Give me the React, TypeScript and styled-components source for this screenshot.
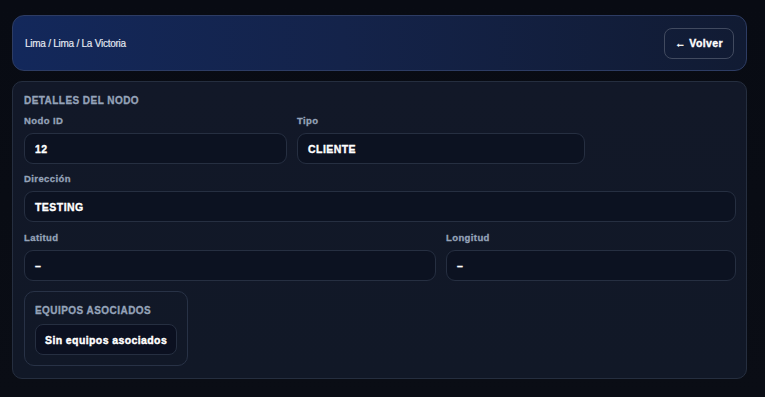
import React from "react";
import styled, { createGlobalStyle } from "styled-components";

const GlobalStyle = createGlobalStyle`
	html, body {
		margin: 0;
		padding: 0;
		background: #080b12;
		font-family: "Liberation Sans", Arial, sans-serif;
	}
`;

const Page = styled.div`
	min-height: 397px;
	box-sizing: border-box;
	padding: 15px 18px 0 12px;
	display: flex;
	flex-direction: column;
	gap: 10px;
	background: linear-gradient(180deg, #080b13 0%, #0a0d15 100%);
`;

const Header = styled.header`
	height: 56px;
	box-sizing: border-box;
	display: flex;
	align-items: center;
	justify-content: space-between;
	padding: 0 12px 0 12px;
	border: 1px solid #2d3c63;
	border-radius: 12px;
	background: linear-gradient(90deg, #13285b 0%, #14234a 45%, #111b33 100%);
`;

const Breadcrumb = styled.span`
	color: #e8ecf4;
	font-size: 10px;
	letter-spacing: -0.25px;
	-webkit-text-stroke: 0.15px #e8ecf4;
`;

const BackButton = styled.button`
	height: 31px;
	padding: 0 10px;
	border: 1px solid #414a5f;
	border-radius: 8px;
	background: transparent;
	color: #ffffff;
	font-family: inherit;
	font-size: 10.5px;
	font-weight: 700;
	letter-spacing: 0.4px;
	-webkit-text-stroke: 0.35px #fff;
	cursor: pointer;
`;

const Card = styled.section`
	box-sizing: border-box;
	height: 298px;
	padding: 12px 10px 0 11px;
	border: 1px solid #252e3f;
	border-radius: 10px;
	background: linear-gradient(180deg, #121828 0%, #111827 100%);
	display: flex;
	flex-direction: column;
`;

const SectionTitle = styled.h3`
	margin: 0;
	color: #95a3b9;
	font-size: 10px;
	font-weight: 700;
	letter-spacing: 0.45px;
	-webkit-text-stroke: 0.3px #95a3b9;
	line-height: 14px;
`;

const Row = styled.div<{ $cols: string; $top: number }>`
	display: grid;
	grid-template-columns: ${(p) => p.$cols};
	gap: 10px;
	margin-top: ${(p) => p.$top}px;
`;

const Field = styled.div`
	display: flex;
	flex-direction: column;
	gap: 6px;
`;

const Label = styled.label`
	color: #95a3b9;
	font-size: 9.5px;
	font-weight: 700;
	letter-spacing: 0.4px;
	-webkit-text-stroke: 0.3px #95a3b9;
	line-height: 12px;
`;

const Value = styled.div`
	height: 31px;
	box-sizing: border-box;
	display: flex;
	align-items: center;
	padding: 0 10px;
	border: 1px solid #262f41;
	border-radius: 9px;
	background: #0c1221;
	color: #ffffff;
	font-size: 10.5px;
	font-weight: 700;
	letter-spacing: 0.45px;
	-webkit-text-stroke: 0.35px #fff;
`;

const Equipos = styled.div`
	margin-top: 10px;
	width: 164px;
	box-sizing: border-box;
	padding: 12px 10px 10px 10px;
	border: 1px solid #283246;
	border-radius: 10px;
	display: flex;
	flex-direction: column;
	gap: 6px;
`;

const Chip = styled.div`
	height: 31px;
	box-sizing: border-box;
	display: flex;
	align-items: center;
	padding: 0 9px;
	border: 1px solid #262f41;
	border-radius: 8px;
	background: #0b1020;
	color: #ffffff;
	font-size: 10.5px;
	font-weight: 700;
	letter-spacing: 0.4px;
	-webkit-text-stroke: 0.4px #fff;
	white-space: nowrap;
`;

const App = () => {
	return (
		<>
			<GlobalStyle />
			<Page>
				<Header>
					<Breadcrumb>Lima / Lima / La Victoria</Breadcrumb>
					<BackButton>← Volver</BackButton>
				</Header>
				<Card>
					<SectionTitle>DETALLES DEL NODO</SectionTitle>
					<Row $cols="263px 288px" $top={7}>
						<Field>
							<Label>Nodo ID</Label>
							<Value>12</Value>
						</Field>
						<Field>
							<Label>Tipo</Label>
							<Value>CLIENTE</Value>
						</Field>
					</Row>
					<Row $cols="1fr" $top={9}>
						<Field>
							<Label>Dirección</Label>
							<Value>TESTING</Value>
						</Field>
					</Row>
					<Row $cols="1fr 290px" $top={10}>
						<Field>
							<Label>Latitud</Label>
							<Value>–</Value>
						</Field>
						<Field>
							<Label>Longitud</Label>
							<Value>–</Value>
						</Field>
					</Row>
					<Equipos>
						<SectionTitle>EQUIPOS ASOCIADOS</SectionTitle>
						<Chip>Sin equipos asociados</Chip>
					</Equipos>
				</Card>
			</Page>
		</>
	);
};

export default App;
